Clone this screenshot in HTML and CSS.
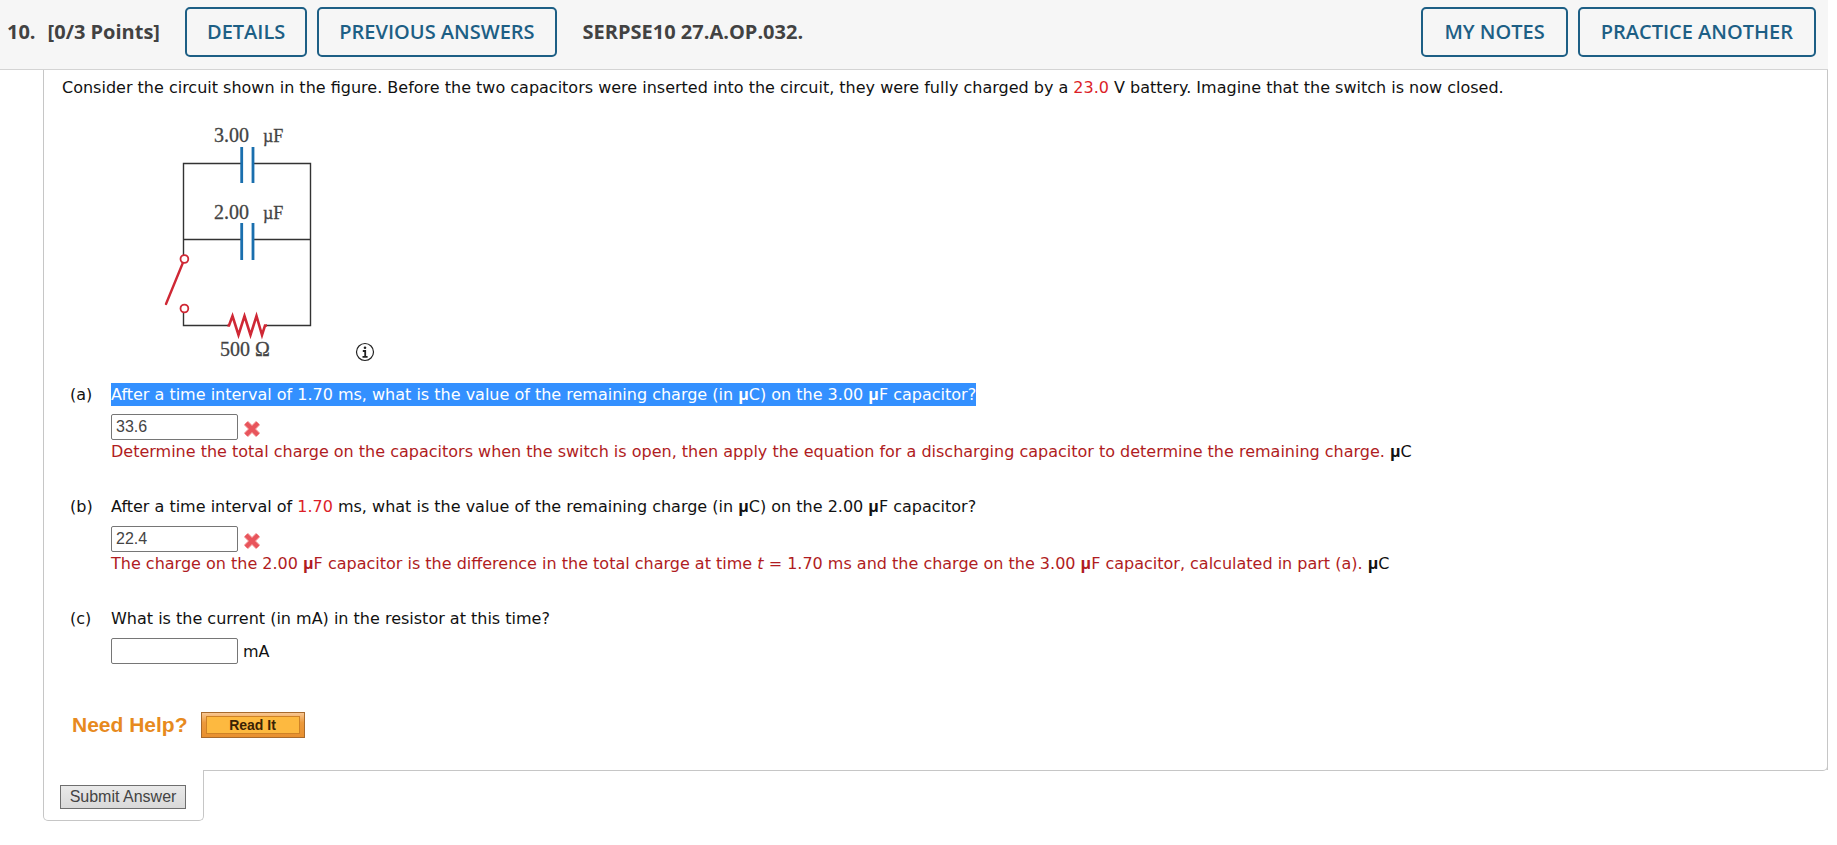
FILE: index.html
```
<!DOCTYPE html>
<html lang="en">
<head>
<meta charset="utf-8">
<title>SERPSE10 27.A.OP.032.</title>
<link rel="stylesheet" href="styles.css">
</head>
<body>
<main class="question">
  <header class="bar">
    <h2 class="points"><span>10.</span><span>[0/3 Points]</span></h2>
    <div class="group">
      <button class="btn" type="button">DETAILS</button>
      <button class="btn" type="button">PREVIOUS ANSWERS</button>
    </div>
    <strong class="code">SERPSE10 27.A.OP.032.</strong>
    <div class="group actions">
      <button class="btn" type="button">MY NOTES</button>
      <button class="btn" type="button">PRACTICE ANOTHER</button>
    </div>
  </header>

  <section class="content">
    <p class="intro">Consider the circuit shown in the figure. Before the two capacitors were inserted into the circuit, they were fully charged by a <span class="num">23.0</span> V battery. Imagine that the switch is now closed.</p>

    <div class="figure">
      <svg class="circuit" width="170" height="250" viewBox="0 0 170 250" role="img" aria-label="Circuit with two capacitors, a resistor and an open switch">
        <g fill="none" stroke="#333" stroke-width="1.4">
          <path d="M81.7 53.5H23.5V145M93 53.5H150.5V215.5H106M23.5 129.5H81.7M93 129.5H150.5M23.5 203V215.5H68"/>
        </g>
        <path d="M81.7 37V73M93 37V73M81.7 113V150M93 113V150" fill="none" stroke="#1a6fae" stroke-width="2.8"/>
        <g fill="none" stroke="#cf2835">
          <circle cx="24.4" cy="149" r="3.9" stroke-width="1.8"/>
          <circle cx="24.4" cy="198.5" r="3.9" stroke-width="1.8"/>
          <path d="M22.8 153L6 194" stroke-width="2.4" stroke-linecap="round"/>
          <path d="M67.5 215.5H69L72.5 206L78.500 225L84.500 206L90.500 225L96.500 206L102 225L105 215.500H107" stroke-width="2.6"/>
        </g>
        <g class="label">
          <text x="54" y="32">3.00</text><text class="unit" x="103" y="32">µF</text>
          <text x="54" y="109">2.00</text><text class="unit" x="103" y="109">µF</text>
          <text x="60" y="246">500 Ω</text>
        </g>
      </svg>
      <button class="info" type="button" aria-label="Figure information">
        <svg width="20" height="20" viewBox="0 0 20 20"><circle cx="10" cy="10" r="8.5" fill="none" stroke="#222" stroke-width="1.2"/><circle cx="10" cy="5.8" r="1.3" fill="#222"/><path d="M7.8 9H10.2V14.5M7.5 14.8H12.6" fill="none" stroke="#222" stroke-width="1.8"/></svg>
      </button>
    </div>

    <ol class="parts">
      <li class="part">
        <span class="letter">(a)</span>
        <div>
          <label class="prompt" for="a"><span class="selected">After a time interval of 1.70 ms, what is the value of the remaining charge (in <span class="mu">µ</span>C) on the 3.00 <span class="mu">µ</span>F capacitor?</span></label>
          <div class="entry"><input class="answer" id="a" type="text" value="33.6"><svg class="wrong" width="18" height="18" viewBox="0 0 18 18" role="img" aria-label="Incorrect"><path d="M3 3L15 15M15 3L3 15" stroke="#f6a3a3" stroke-width="6"/><path d="M3 3L15 15M15 3L3 15" stroke="#e8555c" stroke-width="4.2"/></svg></div>
          <p class="feedback"><span class="hint">Determine the total charge on the capacitors when the switch is open, then apply the equation for a discharging capacitor to determine the remaining charge.</span> <span class="mu">µ</span>C</p>
        </div>
      </li>
      <li class="part">
        <span class="letter">(b)</span>
        <div>
          <label class="prompt" for="b">After a time interval of <span class="num">1.70</span> ms, what is the value of the remaining charge (in <span class="mu">µ</span>C) on the 2.00 <span class="mu">µ</span>F capacitor?</label>
          <div class="entry"><input class="answer" id="b" type="text" value="22.4"><svg class="wrong" width="18" height="18" viewBox="0 0 18 18" role="img" aria-label="Incorrect"><path d="M3 3L15 15M15 3L3 15" stroke="#f6a3a3" stroke-width="6"/><path d="M3 3L15 15M15 3L3 15" stroke="#e8555c" stroke-width="4.2"/></svg></div>
          <p class="feedback"><span class="hint">The charge on the 2.00 <span class="mu">µ</span>F capacitor is the difference in the total charge at time <i>t</i> = 1.70 ms and the charge on the 3.00 <span class="mu">µ</span>F capacitor, calculated in part (a).</span> <span class="mu">µ</span>C</p>
        </div>
      </li>
      <li class="part">
        <span class="letter">(c)</span>
        <div>
          <label class="prompt" for="c">What is the current (in mA) in the resistor at this time?</label>
          <div class="entry"><input class="answer" id="c" type="text"><span>mA</span></div>
        </div>
      </li>
    </ol>

    <div class="help">
      <strong class="need">Need Help?</strong>
      <button class="read" type="button"><span>Read It</span></button>
    </div>
  </section>

  <footer class="foot">
    <div class="tab"><button class="submit" type="button">Submit Answer</button></div>
    <div class="edge"></div>
  </footer>
</main>
</body>
</html>
```
FILE: styles.css
```
* { box-sizing: border-box; }

body {
  margin: 0;
  background: #fff;
  color: #111;
  font: 16px/23px "DejaVu Sans", Verdana, sans-serif;
}

p, ol, h2 { margin: 0; padding: 0; }

.question { margin-right: 9px; }

.bar {
  display: flex;
  align-items: center;
  height: 70px;
  padding: 0 12px 6px 7px;
  background: #f6f6f6;
  border-bottom: 1px solid #d4d4d4;
  color: #424242;
  font: 600 20px/24px "Open Sans", sans-serif;
}

.points { display: flex; gap: 12px; margin-right: 25px; font: inherit; font-weight: 700; }
.code { margin-left: 26px; font-weight: 700; }
.group { display: flex; gap: 10px; }
.actions { margin-left: auto; }

.btn {
  height: 50px;
  padding: 0 20px;
  border: 2px solid #1d5f85;
  border-radius: 5px;
  background: transparent;
  color: #1d5f85;
  font: 600 20px/24px "Open Sans", sans-serif;
  white-space: nowrap;
}
.actions .btn { padding: 0 21px; }

.content {
  margin-left: 43px;
  padding: 6px 18px 32px;
  border: solid #c6c6c6;
  border-width: 0 1px;
}

.figure {
  display: flex;
  align-items: flex-end;
  gap: 25px;
  margin: 11px 0 0 98px;
}

.circuit { display: block; }
.label { font: 20px "Liberation Serif", serif; fill: #444; stroke: #444; stroke-width: 0.3px; }
.unit { font-size: 18px; }

.info { display: block; height: 20px; margin-bottom: -2px; padding: 0; border: 0; background: none; }
.info svg { display: block; }

.parts { margin-top: 23px; list-style: none; }
.part { display: grid; grid-template-columns: 41px 1fr; margin: 0 0 32px 8px; }
.prompt { display: block; }
.selected { display: inline-block; background: #3390ff; color: #fff; }
.entry { display: flex; align-items: center; gap: 5px; margin-top: 8px; }
.wrong { margin-top: 3px; }

.answer {
  width: 127px;
  height: 26px;
  padding: 1px 4px;
  border: 1px solid #767676;
  border-radius: 2px;
  color: #444;
  font: 16px "Liberation Sans", Arial, sans-serif;
}

.num { color: #dc1e28; }
.hint { color: #b01c22; }
.mu { font-family: "Open Sans", sans-serif; font-weight: 700; line-height: 1; }

.help { display: flex; align-items: center; gap: 13px; padding: 16px 0 0 10px; }
.need { color: #e78a1e; font: 700 21px/26px "Liberation Sans", Arial, sans-serif; }

.read {
  width: 104px;
  height: 26px;
  padding: 3px 4px;
  border: 1px solid #a86a2c;
  background: linear-gradient(#f8c793, #ec9a3c 40%, #e8902f);
  color: #3a2205;
  font: 700 14px/16px "Liberation Sans", Arial, sans-serif;
}
.read span { display: block; border: 1px solid #cf8226; background: #fdb940; }

.foot { display: flex; align-items: flex-start; margin-left: 43px; }

.tab {
  padding: 15px 17px 11px 16px;
  border: solid #c6c6c6;
  border-width: 0 1px 1px;
  border-radius: 0 0 5px 5px;
}

.edge {
  flex: 1;
  height: 6px;
  margin: -5px 0 0 -1px;
  border: solid #c6c6c6;
  border-width: 0 1px 1px 0;
  border-radius: 0 0 5px 0;
}

.submit {
  display: block;
  width: 126px;
  height: 24px;
  padding: 0;
  border: 1px solid #6e6e6e;
  background: linear-gradient(#e9e9e9, #d9d9d9);
  color: #444;
  font: 16px/20px "Liberation Sans", Arial, sans-serif;
}
```
